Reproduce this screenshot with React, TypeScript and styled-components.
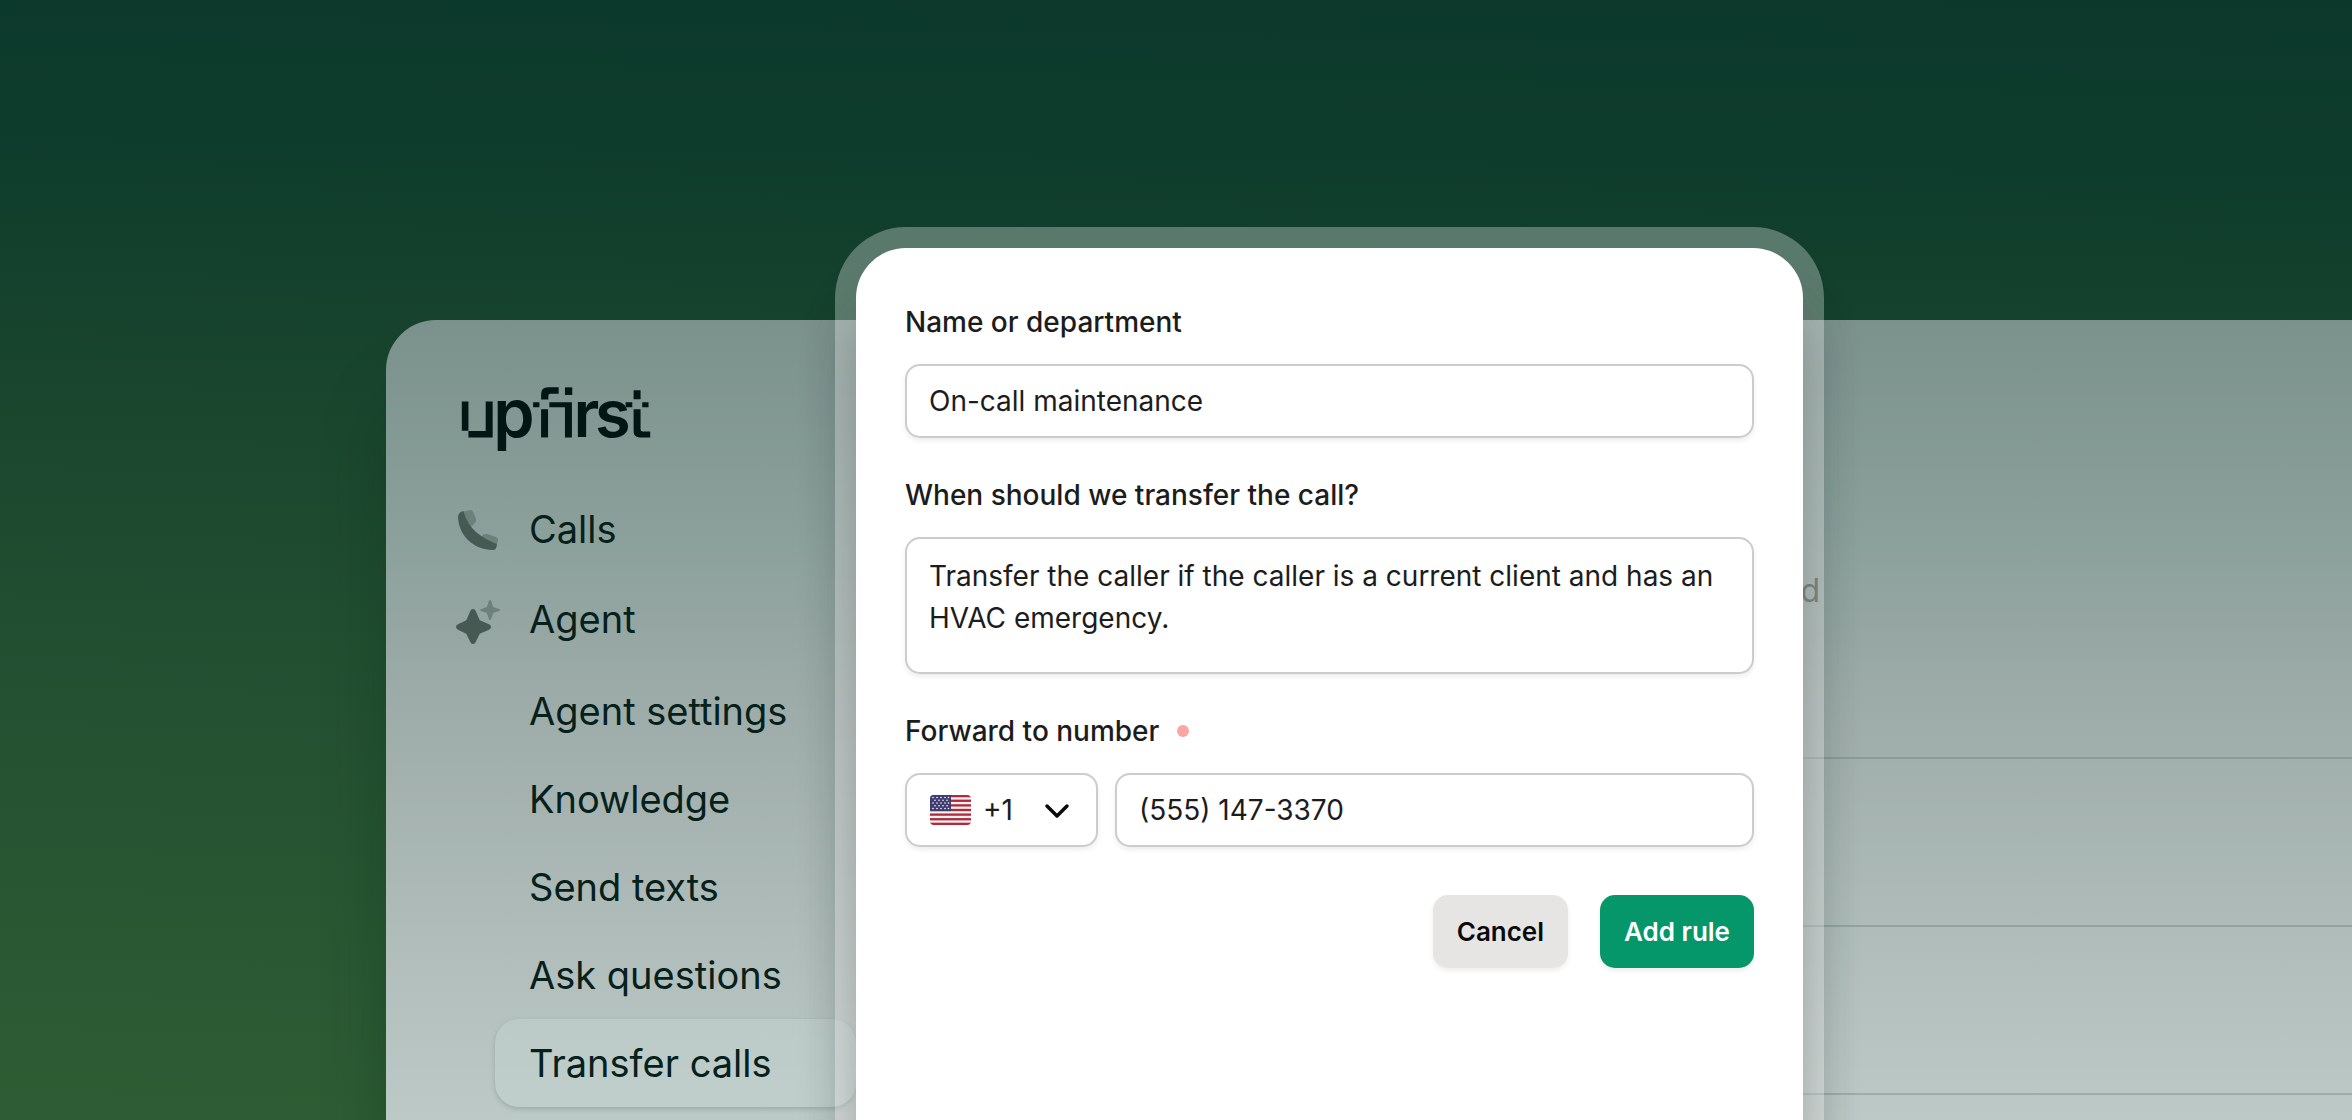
import React from 'react';
import styled, { createGlobalStyle } from 'styled-components';

const GlobalStyle = createGlobalStyle`
  *, *::before, *::after { box-sizing: border-box; }
  body {
    margin: 0;
    background: #0b372a;
    font-family: Inter, "Liberation Sans", sans-serif;
    color: #1c1c1c;
  }
  button, input, select, textarea { font-family: inherit; }
`;

const Stage = styled.main`
  position: relative;
  display: grid;
  grid-template-columns: 386fr 1966fr;
  grid-template-rows: minmax(0, 1fr);
  height: 100vh;
  overflow: hidden;
  padding-top: 320px;
  background: linear-gradient(181deg, #0b382b 0%, #0e3c2c 15%, #19452e 36%, #235031 62%, #2e5d34 100%);
`;

const AppWindow = styled.div`
  grid-column: 2;
  display: grid;
  grid-template-columns: 470px 1fr;
  border-top-left-radius: 50px;
  background: linear-gradient(180deg, #7b918c 0%, #8a9f9a 25%, #9fadaa 50%, #b1bebb 80%, #bdc9c6 100%);
  box-shadow: 0 70px 60px rgba(8, 50, 24, 0.35);
`;

const Sidebar = styled.aside`
  display: flex;
  flex-direction: column;
  padding: 67px 0 0 62px;
`;

const Brand = styled.a`
  display: block;
  height: 65px;
  margin: 0 13px 33px;
  color: #021713;
`;

const Nav = styled.nav`
  display: flex;
  flex-direction: column;
  gap: 2px;
`;

const SubNav = styled.div`
  display: flex;
  flex-direction: column;
  margin: 2px 0 0 47px;
`;

const NavLink = styled.a<{ $child?: boolean; $active?: boolean }>`
  display: flex;
  align-items: center;
  gap: 24px;
  height: 88px;
  padding-left: ${(p) => (p.$child ? 34 : 0)}px;
  border-radius: 24px;
  color: #06201b;
  font-size: 38px;
  line-height: 46px;
  text-decoration: none;
  white-space: nowrap;
  background: ${(p) => (p.$active ? 'rgba(203, 220, 217, 0.32)' : 'transparent')};
  box-shadow: ${(p) => (p.$active ? '0 2px 5px rgba(40, 70, 65, 0.22)' : 'none')};
`;

const NavIcon = styled.svg`
  width: 57px;
  height: 56px;
  flex: none;
`;

const Content = styled.section`
  display: flex;
  flex-direction: column;
  padding-top: 251px;
`;

const ColumnHead = styled.div`
  flex: none;
  width: 964px;
  height: 40px;
  margin-bottom: 146px;
  font-size: 32px;
  line-height: 40px;
  text-align: right;
  color: #42544f;
`;

const RuleLine = styled.hr`
  flex: none;
  width: 100%;
  height: 2px;
  margin: 0 0 166px;
  border: 0;
  background: rgba(60, 92, 88, 0.24);
`;

const Overlay = styled.div`
  position: absolute;
  inset: 0;
  display: grid;
  grid-template-columns: 835fr 989fr 528fr;
  align-items: start;
  padding-top: 227px;
`;

const Frame = styled.div`
  grid-column: 2;
  padding: 21px;
  border-radius: 71px;
  background: rgba(255, 255, 255, 0.3);
  box-shadow: 0 50px 40px rgba(20, 50, 42, 0.12);
`;

const Card = styled.form`
  display: flex;
  flex-direction: column;
  gap: 40px;
  padding: 57px 49px 200px;
  border-radius: 50px;
  background: #fff;
  box-shadow: 0 60px 50px rgba(40, 40, 40, 0.3);
`;

const Field = styled.div`
  display: flex;
  flex-direction: column;
  gap: 25px;
`;

const Label = styled.label`
  display: flex;
  align-items: center;
  gap: 18px;
  font-size: 28px;
  font-weight: 500;
  line-height: 34px;
`;

const RequiredDot = styled.span`
  width: 12px;
  height: 12px;
  border-radius: 50%;
  background: #fca5a5;
`;

const control = `
  border: 2px solid #cccccc;
  border-radius: 15px;
  background: #fff;
  color: #1c1c1c;
  font-size: 28px;
  box-shadow: 0 3px 5px rgba(0, 0, 0, 0.07);
  outline: none;
`;

const TextInput = styled.input`
  ${control}
  width: 100%;
  min-width: 0;
  height: 74px;
  padding: 0 22px;
`;

const TextArea = styled.textarea`
  ${control}
  display: block;
  width: 100%;
  height: 137px;
  padding: 16px 22px;
  line-height: 42px;
  resize: none;
  overflow: hidden;
`;

const PhoneRow = styled.div`
  display: flex;
  gap: 17px;
`;

const CountryPicker = styled.div`
  position: relative;
  flex: none;
`;

const CountrySelect = styled.select`
  ${control}
  appearance: none;
  width: 193px;
  height: 74px;
  padding: 0 60px 0 76px;
`;

const Flag = styled.svg`
  position: absolute;
  left: 25px;
  top: 22px;
  width: 41px;
  height: 30px;
  pointer-events: none;
`;

const Chevron = styled.svg`
  position: absolute;
  right: 28px;
  top: 29px;
  width: 26px;
  height: 18px;
  pointer-events: none;
`;

const Actions = styled.div`
  display: flex;
  justify-content: flex-end;
  gap: 32px;
  padding-top: 8px;
`;

const Button = styled.button<{ $primary?: boolean }>`
  height: 73px;
  padding: 0 24px;
  border: 0;
  border-radius: 15px;
  background: ${(p) => (p.$primary ? '#059669' : '#e7e5e4')};
  color: ${(p) => (p.$primary ? '#ffffff' : '#0a0a0a')};
  font-size: 26px;
  font-weight: 600;
  box-shadow: 0 3px 5px rgba(0, 0, 0, 0.07);
`;

const LogoMark = styled.svg`
  display: block;
  width: 190px;
  height: 65px;
  overflow: visible;
`;

const Logo = () => (
  <LogoMark viewBox="63 50 570 196" fill="currentColor" role="img" aria-label="upfirst">
    <path d="M64 94h20v89h52v-89h21v108H84v-20H64z" />
    <text x="159" y="202" fontSize="200" fontWeight="600">p</text>
    <path d="M279 96h19v15h-19z" />
    <path d="M303 88V72q0-21 21-21h32v19h-25q-6 0-6 6v12z" />
    <path d="M303 117h21v85h-21z" />
    <path d="M375 51h22v23h-22z" />
    <path d="M328 96h68v106h-21v-91h-47z" />
    <text x="401" y="202" fontSize="196" fontWeight="600">r</text>
    <text x="466" y="202" fontSize="196" fontWeight="600">s</text>
    <path d="M558 96h20v15h-20zM608 96h19v15h-19zM582 60h21v27h-21z" />
    <path d="M582 117h21v61q0 6 6 6h23v18h-31q-19 0-19-19z" />
  </LogoMark>
);

const PhoneIcon = () => (
  <NavIcon viewBox="0 0 57 56" aria-hidden="true">
    <path d="M15.500 10.500L22 9q2-.4 3 1.500l3 7.500q.8 2-1 3.700L22 27z" fill="#6d807b" />
    <path d="M31 37.500l4.500-4q1.500-1 3.500-.4l9 3q2.300 1 2 3.200L48.500 46z" fill="#6d807b" />
    <path d="M15.500 10q-5.500 1-5.500 6.500C11 35 26 49 45 49q3 0 3.500-3.500l.3-2.500Q36 38 28 31 19 23 15.500 10z" fill="#475953" />
  </NavIcon>
);

const SparklesIcon = () => (
  <NavIcon viewBox="0 -2 57 56" aria-hidden="true">
    <path d="M42 7q.8 0 1.200 1.200l2 5.800 5.800 2q1.200.3 1.200 1t-1.200 1l-5.800 2-2 5.800q-.4 1.200-1.200 1.200t-1.200-1.200l-2-5.800-5.500-2q-1.200-.3-1.200-1t1.200-1l5.500-2 2-5.800Q41.200 7 42 7z" fill="#6d807b" />
    <path d="M25 16q2 0 2.700 2l4 9.300 9.300 4q2 .8 2 2.700t-2 2.700l-9.300 4-4 8.300q-.7 2-2.700 2t-2.700-2l-4-8.300-8.300-4q-2-.8-2-2.700t2-2.700l8.300-4 4-9.300q.7-2 2.700-2z" fill="#475953" />
  </NavIcon>
);

const UsFlag = () => (
  <Flag viewBox="0 0 41 30" aria-hidden="true">
    <defs>
      <clipPath id="flag-shape"><rect width="41" height="30" rx="4" /></clipPath>
    </defs>
    <g clipPath="url(#flag-shape)">
      <rect width="41" height="30" fill="#f6f1f2" />
      {[0, 2, 4, 6, 8, 10, 12].map((n) => (
        <rect key={n} y={(n * 30) / 13} width="41" height={30 / 13} fill="#b02a3c" />
      ))}
      <rect width="21" height="16.150" fill="#3f3c72" />
      {[2.5, 5.300, 8, 10.800, 13.500].map((y, row) =>
        (row % 2 ? [5, 9, 13, 17] : [3, 7, 11, 15, 18.500]).map((x) => (
          <circle key={`${x}-${y}`} cx={x} cy={y} r="0.8" fill="#fff" />
        )),
      )}
    </g>
  </Flag>
);

const childLinks = ['Agent settings', 'Knowledge', 'Send texts', 'Ask questions', 'Transfer calls'];

export default function App() {
  return (
    <>
      <GlobalStyle />
      <Stage>
        <AppWindow>
          <Sidebar>
            <Brand href="#home"><Logo /></Brand>
            <Nav>
              <NavLink href="#calls"><PhoneIcon />Calls</NavLink>
              <NavLink href="#agent"><SparklesIcon />Agent</NavLink>
              <SubNav>
                {childLinks.map((name) => (
                  <NavLink key={name} href={`#${name}`} $child $active={name === 'Transfer calls'}>
                    {name}
                  </NavLink>
                ))}
              </SubNav>
            </Nav>
          </Sidebar>
          <Content>
            <ColumnHead>d</ColumnHead>
            <RuleLine />
            <RuleLine />
            <RuleLine />
          </Content>
        </AppWindow>
        <Overlay>
          <Frame>
            <Card onSubmit={(e) => e.preventDefault()}>
              <Field>
                <Label htmlFor="name">Name or department</Label>
                <TextInput id="name" defaultValue="On-call maintenance" />
              </Field>
              <Field>
                <Label htmlFor="condition">When should we transfer the call?</Label>
                <TextArea
                  id="condition"
                  defaultValue="Transfer the caller if the caller is a current client and has an HVAC emergency."
                />
              </Field>
              <Field>
                <Label htmlFor="phone">Forward to number<RequiredDot /></Label>
                <PhoneRow>
                  <CountryPicker>
                    <CountrySelect aria-label="Country code" defaultValue="+1">
                      <option>+1</option>
                    </CountrySelect>
                    <UsFlag />
                    <Chevron viewBox="0 0 26 18" fill="none" stroke="#0a0a0a" strokeWidth="3.500" strokeLinecap="round" strokeLinejoin="round" aria-hidden="true">
                      <path d="M3 4l10 10 10-10" />
                    </Chevron>
                  </CountryPicker>
                  <TextInput id="phone" type="tel" defaultValue="(555) 147-3370" />
                </PhoneRow>
              </Field>
              <Actions>
                <Button type="button">Cancel</Button>
                <Button type="submit" $primary>Add rule</Button>
              </Actions>
            </Card>
          </Frame>
        </Overlay>
      </Stage>
    </>
  );
}
